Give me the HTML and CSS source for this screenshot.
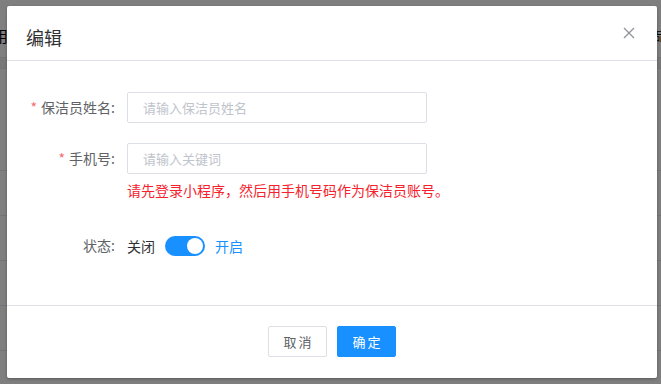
FILE: index.html
```html
<!DOCTYPE html>
<html lang="zh">
<head>
<meta charset="utf-8">
<link rel="stylesheet" href="styles.css">
</head>
<body>
<div class="page">
  <div class="bg-row r1"><span class="bg-l">用</span><span class="bg-r">品</span></div>
  <div class="bg-row r2"></div>
  <div class="bg-row r3"></div>
  <div class="bg-row r4"></div>
  <div class="bg-row r5"></div>
  <div class="bg-row r6"></div>
  <div class="bg-row r7"></div>
</div>
<div class="overlay"></div>
<div class="dialog">
  <div class="dlg-header">
    <span class="dlg-title">编辑</span>
    <svg class="close" width="12" height="12" viewBox="0 0 12 12"><path d="M1 1L11 11M11 1L1 11" stroke="#909399" stroke-width="1.3" fill="none"/></svg>
  </div>
  <div class="dlg-body">
    <div class="form-row">
      <label class="form-label"><span class="req">*</span>保洁员姓名:</label>
      <div class="form-control"><input class="input" placeholder="请输入保洁员姓名"></div>
    </div>
    <div class="form-row">
      <label class="form-label"><span class="req">*</span>手机号:</label>
      <div class="form-control">
        <input class="input" placeholder="请输入关键词">
        <div class="tip">请先登录小程序，然后用手机号码作为保洁员账号。</div>
      </div>
    </div>
    <div class="form-row status-row">
      <label class="form-label">状态:</label>
      <div class="form-control switch-wrap">
        <span class="sw-text">关闭</span>
        <span class="switch"><span class="knob"></span></span>
        <span class="sw-text on">开启</span>
      </div>
    </div>
  </div>
  <div class="dlg-footer">
    <button class="btn">取消</button>
    <button class="btn primary">确定</button>
  </div>
</div>
</body>
</html>
```
FILE: styles.css
```css
html, body {
  margin: 0;
  padding: 0;
}
body {
  width: 661px;
  height: 384px;
  overflow: hidden;
  position: relative;
  font-family: "Noto Sans CJK SC", "Noto Sans", sans-serif;
  background: #fff;
}
.page {
  display: flex;
  flex-direction: column;
}
.bg-row {
  border-bottom: 1px solid #e8e8e8;
  display: flex;
  justify-content: space-between;
  align-items: center;
  font-size: 14px;
  color: #000;
  box-sizing: border-box;
}
.r1 { height: 58px; padding-top: 14px; }
.bg-l { margin-left: -7px; font-size: 15px; }
.bg-r { margin-right: -5px; font-size: 12px; }
.r2 { height: 11px; background: #f0f0f0; }
.r3 { height: 102px; }
.r4 { height: 45px; }
.r5 { height: 45px; }
.r6 { height: 45px; }
.r7 { height: 45px; }
.overlay {
  position: absolute;
  inset: 0;
  background: rgba(0, 0, 0, 0.5);
}
.dialog {
  position: absolute;
  left: 7px;
  top: 6px;
  width: 650px;
  height: 372px;
  background: #fff;
  border-radius: 2px;
  box-shadow: 0 1px 3px rgba(0, 0, 0, 0.3);
  display: flex;
  flex-direction: column;
}
.dlg-header {
  height: 55px;
  flex: none;
  box-sizing: border-box;
  border-bottom: 1px solid #dcdfe6;
  display: flex;
  align-items: center;
  justify-content: space-between;
  padding: 0 22px 0 19px;
}
.dlg-title {
  font-size: 18px;
  color: #303133;
  line-height: 24px;
  margin-top: 8px;
}
.close {
  margin-top: -1px;
}
.dlg-body {
  flex: 1;
  padding-top: 31px;
  box-sizing: border-box;
  border-bottom: 1px solid #dcdfe6;
}
.form-row {
  display: flex;
  margin-bottom: 20px;
}
.form-label {
  width: 108px;
  text-align: right;
  font-size: 14px;
  color: #606266;
  line-height: 31px;
  height: 31px;
  padding-right: 12px;
  box-sizing: content-box;
}
.req {
  color: #f56c6c;
  margin-right: 4px;
}
.form-control {
  display: flex;
  flex-direction: column;
}
.input {
  width: 300px;
  height: 31px;
  box-sizing: border-box;
  border: 1px solid #dcdfe6;
  border-radius: 2px;
  padding: 0 15px;
  font-size: 13px;
  font-family: inherit;
  color: #606266;
  outline: none;
}
.input::placeholder {
  color: #c0c4cc;
}
.tip {
  font-size: 14px;
  color: #f5222d;
  line-height: 20px;
  margin-top: 6px;
  white-space: nowrap;
}
.status-row {
  margin-top: 30px;
}
.switch-wrap {
  flex-direction: row;
  align-items: center;
  height: 31px;
}
.sw-text {
  font-size: 14px;
  color: #303133;
}
.sw-text.on {
  color: #1890ff;
}
.switch {
  width: 40px;
  height: 20px;
  border-radius: 10px;
  background: #1890ff;
  margin: 0 10px;
  position: relative;
  display: block;
}
.knob {
  position: absolute;
  top: 2px;
  right: 2px;
  width: 16px;
  height: 16px;
  border-radius: 50%;
  background: #fff;
}
.dlg-footer {
  height: 72px;
  flex: none;
  box-sizing: border-box;
  display: flex;
  justify-content: center;
  align-items: flex-start;
  padding-top: 20px;
  gap: 10px;
}
.btn {
  width: 59px;
  height: 31px;
  border: 1px solid #dcdfe6;
  border-radius: 2px;
  background: #fff;
  color: #606266;
  font-family: inherit;
  font-size: 13px;
  letter-spacing: 2px;
  padding: 0 0 0 2px;
}
.btn.primary {
  background: #1890ff;
  border-color: #1890ff;
  color: #fff;
}
```
